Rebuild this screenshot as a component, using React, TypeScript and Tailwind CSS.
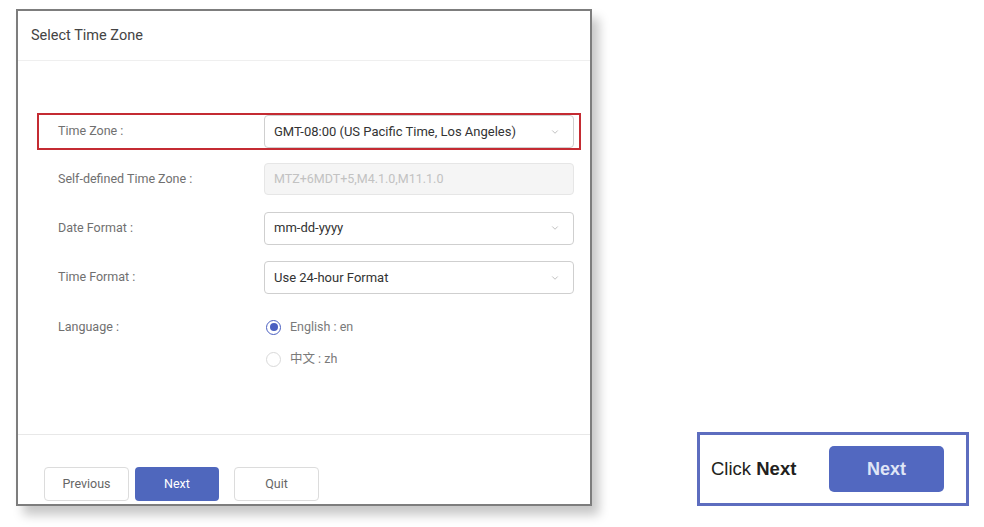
import { ChevronDown } from 'lucide-react'

const FONT = { fontFamily: 'Roboto, "Noto Sans CJK SC", sans-serif' }

function SelectBox({ value }: { value: string }) {
  return (
    <div className="w-[310px] h-[33px] border border-[#cfcfcf] rounded-[4px] bg-white flex items-center justify-between pl-[9px] pr-[13px]">
      <span className="text-[13px] text-[#333]">{value}</span>
      <ChevronDown size={10} strokeWidth={1.5} className="text-[#9a9a9a]" />
    </div>
  )
}

function Radio({ checked, label }: { checked?: boolean; label: string }) {
  return (
    <div className="h-[32px] flex items-center gap-[9px] pl-[1px]">
      {checked ? (
        <span className="w-[15px] h-[15px] rounded-full border-[1.5px] border-[#4a5fc1] flex items-center justify-center">
          <span className="w-[8px] h-[8px] rounded-full bg-[#4a5fc1]" />
        </span>
      ) : (
        <span className="w-[15px] h-[15px] rounded-full border border-[#d9d9d9] bg-white" />
      )}
      <span className="text-[12.5px] text-[#7a7a7a]">{label}</span>
    </div>
  )
}

export default function App() {
  return (
    <div className="w-[984px] h-[527px] bg-white flex items-start overflow-hidden" style={FONT}>
      {/* Wizard dialog */}
      <div className="ml-[16px] mt-[9px] w-[576px] h-[497px] border-2 border-[#7d7d7d] bg-white flex flex-col shadow-[7px_9px_10px_rgba(0,0,0,0.22)]">
        <div className="h-[50px] border-b border-[#efefef] flex items-center pl-[13px]">
          <span className="text-[14.5px] text-[#444]">Select Time Zone</span>
        </div>

        <div className="h-[373px] pt-[47px] pl-[19px] pr-[9px] flex flex-col">
          <div className="h-[47px] flex items-center">
            <div className="w-[544px] h-[37px] border-2 border-[#c42b32] flex items-center">
              <span className="w-[225px] pl-[19px] text-[12.5px] text-[#707070]">Time Zone :</span>
              <SelectBox value="GMT-08:00 (US Pacific Time, Los Angeles)" />
            </div>
          </div>

          <div className="h-[48px] flex items-center pl-[2px]">
            <span className="w-[225px] pl-[19px] text-[12.5px] text-[#707070]">Self-defined Time Zone :</span>
            <div className="w-[310px] h-[32px] border border-[#e6e6e6] rounded-[4px] bg-[#f5f5f5] flex items-center pl-[9px]">
              <span className="text-[12.5px] text-[#c2c2c2]">MTZ+6MDT+5,M4.1.0,M11.1.0</span>
            </div>
          </div>

          <div className="h-[50px] flex items-center pl-[2px]">
            <span className="w-[225px] pl-[19px] text-[12.5px] text-[#707070]">Date Format :</span>
            <SelectBox value="mm-dd-yyyy" />
          </div>

          <div className="h-[49px] flex items-center pl-[2px]">
            <span className="w-[225px] pl-[19px] text-[12.5px] text-[#707070]">Time Format :</span>
            <SelectBox value="Use 24-hour Format" />
          </div>

          <div className="flex items-start pt-[9px] pl-[2px]">
            <span className="w-[225px] h-[32px] flex items-center pl-[19px] text-[12.5px] text-[#707070]">Language :</span>
            <div className="flex flex-col pl-[1px]">
              <Radio checked label="English : en" />
              <Radio label="中文 : zh" />
            </div>
          </div>
        </div>

        <div className="flex-1 border-t border-[#e8e8e8] pt-[32px] pl-[26px] flex items-start">
          <button className="w-[85px] h-[34px] border border-[#dcdcdc] rounded-[4px] bg-white text-[12.5px] text-[#666]">
            Previous
          </button>
          <button className="ml-[6px] w-[84px] h-[34px] rounded-[4px] bg-[#4f67bd] text-[12.5px] text-white">
            Next
          </button>
          <button className="ml-[15px] w-[85px] h-[34px] border border-[#dcdcdc] rounded-[4px] bg-white text-[12.5px] text-[#666]">
            Quit
          </button>
        </div>
      </div>

      {/* Callout */}
      <div
        className="ml-[105px] mt-[432px] w-[272px] h-[74px] border-[3px] border-[#5d6dbf] flex items-center justify-between pl-[11px] pr-[22px]"
        style={{ fontFamily: '"Liberation Sans", Arial, sans-serif' }}
      >
        <span className="text-[18.5px] text-[#231f20]">
          Click <span className="font-bold">Next</span>
        </span>
        <div className="w-[115px] h-[46px] rounded-[5px] bg-[#5268c0] flex items-center justify-center">
          <span className="text-[18px] font-bold text-[#dfe5f6]">Next</span>
        </div>
      </div>
    </div>
  )
}
